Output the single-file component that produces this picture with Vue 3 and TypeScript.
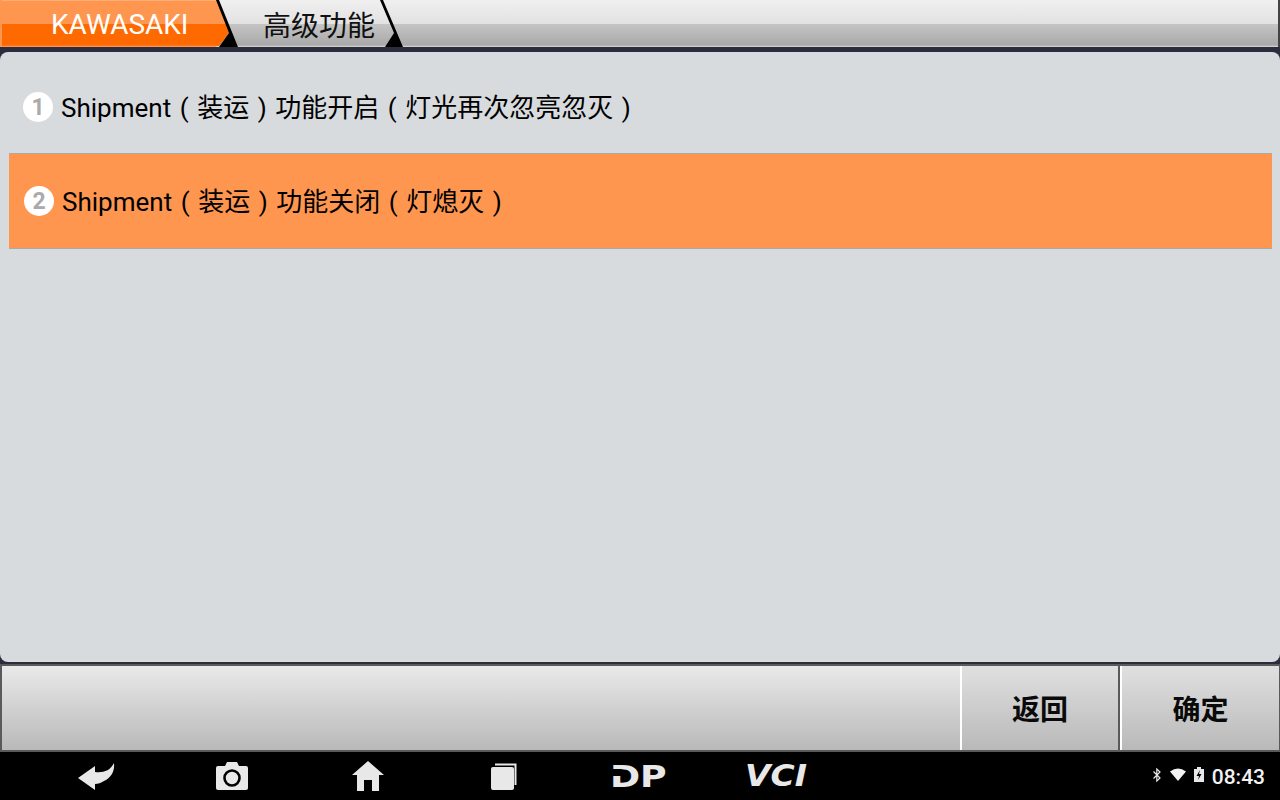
<script setup lang="ts">
interface Part { text: string; paren: boolean }
interface Row { n: number; parts: Part[]; active: boolean }

function split(text: string): Part[] {
  return text
    .split(/([()])/)
    .filter((t) => t.length > 0)
    .map((t) => ({ text: t, paren: t === '(' || t === ')' }))
}

const rows: Row[] = [
  { n: 1, parts: split('Shipment(装运)功能开启(灯光再次忽亮忽灭)'), active: false },
  { n: 2, parts: split('Shipment(装运)功能关闭(灯熄灭)'), active: true },
]
</script>

<template>
  <div class="screen">
    <header class="topbar">
      <div class="crumb crumb-first">
        <span class="crumb-label">KAWASAKI</span>
        <svg class="arrow" width="24" height="47" viewBox="0 0 24 47">
          <path d="M0 0H3L22 47H3L13 33Z" fill="#000" />
        </svg>
      </div>
      <div class="crumb crumb-second">
        <span class="crumb-label">高级功能</span>
        <svg class="arrow" width="24" height="47" viewBox="0 0 24 47">
          <path d="M0 0H3L23 47H5L14 33Z" fill="#000" />
        </svg>
      </div>
    </header>

    <main class="panel">
      <div v-for="row in rows" :key="row.n" class="row" :class="{ active: row.active }">
        <span class="num">{{ row.n }}</span>
        <span class="label"><span v-for="(p, i) in row.parts" :key="i" :class="{ paren: p.paren }">{{ p.text }}</span></span>
      </div>
    </main>

    <footer class="actions">
      <div class="spacer"></div>
      <button class="btn btn-back">返回</button>
      <button class="btn">确定</button>
    </footer>

    <nav class="navbar">
      <svg class="nav-icon back" width="40" height="30" viewBox="0 0 40 30">
        <path d="M1 16L18 4V10C26 11 33 9 37 1C38 9 34 16 27 19C24 21 21 22 18 22V28Z" fill="#e8e8e8" />
      </svg>
      <svg class="nav-icon camera" width="32" height="28" viewBox="0 0 32 28">
        <path d="M2 4H9L11 0H21L23 4H30Q32 4 32 6V26Q32 28 30 28H2Q0 28 0 26V6Q0 4 2 4Z" fill="#e8e8e8" />
        <circle cx="16" cy="16" r="7.5" fill="#e8e8e8" stroke="#000" stroke-width="2.6" />
      </svg>
      <svg class="nav-icon home" width="32" height="30" viewBox="0 0 32 30">
        <path d="M16 0L32 14H27V30H20V19H12V30H5V14H0Z" fill="#e8e8e8" />
      </svg>
      <svg class="nav-icon recent" width="28" height="30" viewBox="0 0 28 30">
        <rect x="1" y="5" width="23" height="23" rx="2" fill="#e8e8e8" />
        <path d="M5 2.5H25.5V23" fill="none" stroke="#e8e8e8" stroke-width="2" />
      </svg>
      <span class="logo dp">DP</span>
      <span class="logo vci">VCI</span>
      <div class="status">
        <svg class="st bt" width="8" height="14" viewBox="0 0 8 14">
          <path d="M0.5 3.5L7 10L3.8 13V1L7 4L0.5 10.5" fill="none" stroke="#e8e8e8" stroke-width="1.2" />
        </svg>
        <svg class="st" width="16" height="13" viewBox="0 0 16 13">
          <path d="M0 3.5Q8 -2.5 16 3.5L8 13Z" fill="#f2f2f2" />
        </svg>
        <svg class="st" width="10" height="15" viewBox="0 0 10 15">
          <path d="M0 2H3V0H7V2H10V15H0Z" fill="#e8e8e8" />
          <path d="M6 3L2.5 9H5L4 13L7.5 7H5Z" fill="#000" />
        </svg>
        <span class="time">08:43</span>
      </div>
    </nav>
  </div>
</template>

<style>
html, body { margin: 0; background: #000; }
</style>

<style scoped>
.screen {
  width: 1280px;
  height: 800px;
  display: flex;
  flex-direction: column;
  overflow: hidden;
  background: #2b2d3c;
  font-family: Roboto, "Noto Sans CJK SC", sans-serif;
}
.topbar {
  height: 47px;
  flex: none;
  display: flex;
  box-sizing: border-box;
  background: linear-gradient(#f0f0f0 0, #e2e2e2 50%, #c4c4c4 52%, #a9a9a9 96%, #dcdcdc 100%);
  border-right: 2px solid #444;
}
.crumb {
  position: relative;
  height: 47px;
  box-sizing: border-box;
  display: flex;
  align-items: center;
  flex: none;
}
.arrow { position: absolute; top: 0; }
.crumb-first {
  width: 216px;
  justify-content: flex-start;
  padding-left: 51px;
  background: linear-gradient(#ffb98c 0, #ff9650 3%, #ff9650 50%, #ff6a00 51%, #ff6a00 96%, #ffa070 100%);
  box-shadow: inset 2px 0 0 #ff9650;
  color: #fff;
  font-size: 28px;
}
.crumb-first .crumb-label { padding-top: 2px; }
.crumb-first::after {
  content: "";
  position: absolute;
  left: 216px;
  top: 0;
  width: 14px;
  height: 47px;
  background: linear-gradient(#ff9650 0, #ff9650 50%, #ff6a00 51%, #ff6a00 100%);
  clip-path: polygon(0 0, 1px 0, 13px 33px, 3px 46px, 0 46px);
}
.crumb-first .arrow { left: 216px; z-index: 1; }
.crumb-second {
  width: 164px;
  padding-left: 47px;
  color: #111;
  font-size: 28px;
}
.crumb-second .arrow { left: 164px; z-index: 1; }
.panel {
  flex: 1;
  min-height: 0;
  margin-top: 5px;
  box-sizing: border-box;
  padding: 8px 8px 0 9px;
  background: #d7dbde;
  border-radius: 8px;
  display: flex;
  flex-direction: column;
}
.row {
  display: flex;
  align-items: center;
  height: 93px;
  padding-left: 14px;
  gap: 8px;
  font-size: 26px;
  color: #000;
}
.row.active {
  height: 96px;
  box-sizing: border-box;
  padding-left: 15px;
  background: #ff9650;
  border-top: 1px solid #aaa;
  border-bottom: 1px solid #aaa;
}
.label { padding-bottom: 3px; }
.paren {
  display: inline-block;
  width: 26px;
  text-align: center;
}
.num {
  width: 30px;
  height: 30px;
  flex: none;
  border-radius: 50%;
  background: #fff;
  color: #aaa;
  font-size: 23px;
  font-weight: 700;
  display: flex;
  align-items: center;
  justify-content: center;
  box-sizing: border-box;
  padding-top: 1px;
}
.actions {
  height: 84px;
  margin-top: 2px;
  flex: none;
  display: flex;
  background: linear-gradient(#e9e9e9, #b9b9b9);
  border-top: 2px solid #5a5a5a;
  border-bottom: 2px solid #5a5a5a;
  border-left: 2px solid #5a5a5a;
  border-right: 1px solid #5a5a5a;
}
.spacer { flex: 1; }
.btn {
  width: 159px;
  height: 84px;
  border: 0;
  padding: 0;
  border-left: 2px solid #fff;
  background: linear-gradient(#e0e0e0, #b9b9b9);
  font: 700 28px Roboto, "Noto Sans CJK SC", sans-serif;
  color: #0a0a0a;
}
.btn-back {
  width: 160px;
  border-right: 2px solid #5a5a5a;
}
.navbar {
  height: 48px;
  flex: none;
  background: #000;
  position: relative;
  display: flex;
  align-items: center;
}
.nav-icon { position: absolute; }
.back { left: 77px; top: 10px; }
.camera { left: 216px; top: 10px; }
.home { left: 352px; top: 9px; }
.recent { left: 490px; top: 10px; }
.logo {
  position: absolute;
  color: #e8e8e8;
  font-family: "DejaVu Sans", sans-serif;
  font-weight: 700;
  line-height: 32px;
}
.dp {
  left: 610px;
  top: 8px;
  font-size: 31px;
  transform: scaleX(1.17);
  transform-origin: left;
}
.dp::after {
  content: "";
  position: absolute;
  left: 0;
  top: 9px;
  width: 10px;
  height: 7px;
  background: #000;
}
.vci {
  left: 745px;
  top: 8px;
  font-size: 30px;
  font-style: italic;
  transform: scaleX(1.1);
  transform-origin: left;
}
.status {
  margin-left: auto;
  margin-right: 15px;
  display: flex;
  align-items: center;
  gap: 8px;
  height: 48px;
  padding-top: 2px;
  box-sizing: border-box;
}
.st { margin-bottom: 5px; }
.bt { margin-right: 1px; margin-bottom: 4px; }
.time { color: #f2f2f2; font-size: 21px; font-weight: 500; }
</style>
